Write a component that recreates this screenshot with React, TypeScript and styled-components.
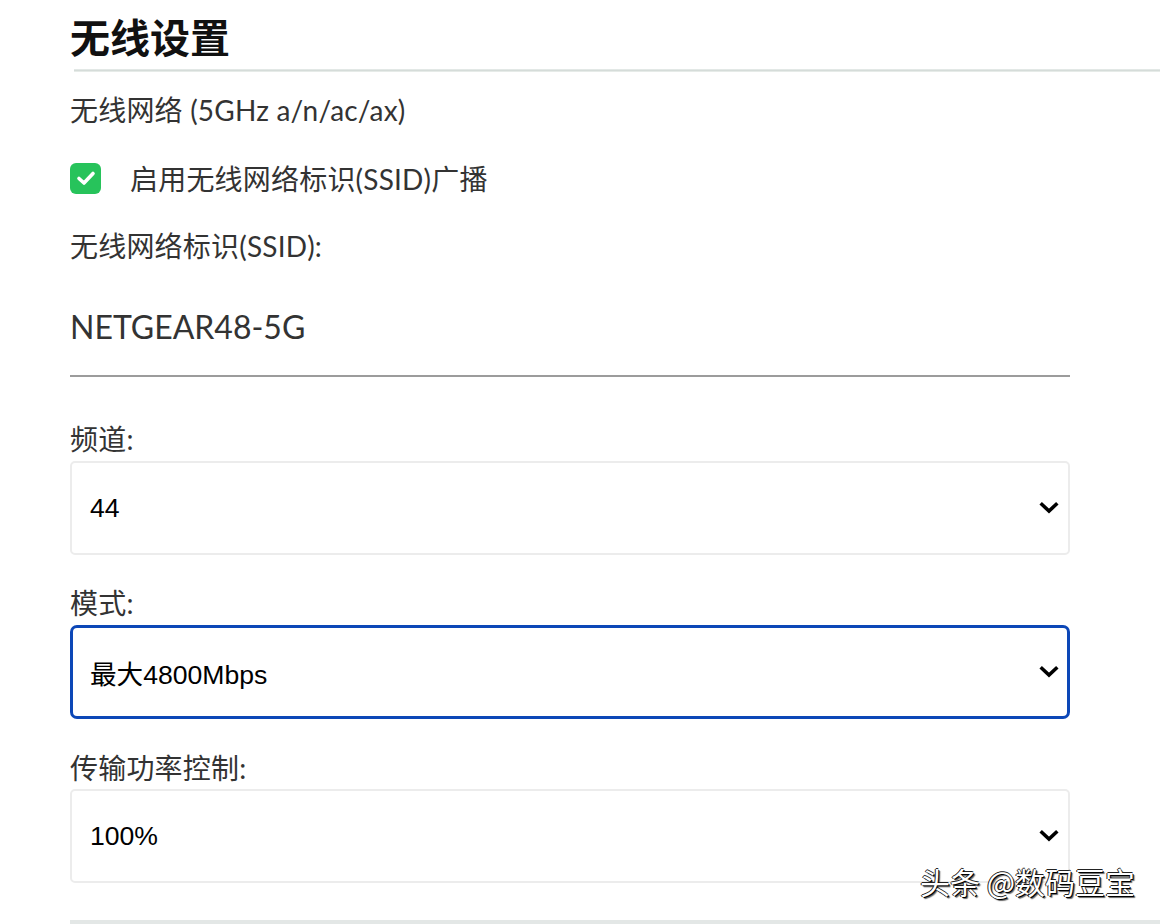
import React from "react";
import styled, { createGlobalStyle } from "styled-components";

const Global = createGlobalStyle`
  html, body { margin: 0; padding: 0; background: #fff; }
  body { font-family: Lato, "Noto Sans CJK SC", sans-serif; }
`;

const Page = styled.div`
  position: relative;
  width: 1160px;
  height: 924px;
  overflow: hidden;
  background: #fff;
  padding-top: 14px;
  box-sizing: border-box;
`;

const Title = styled.h1`
  margin: 0 0 11px 70px;
  font-family: "Noto Sans CJK SC", sans-serif;
  font-weight: 700;
  font-size: 40px;
  line-height: 44px;
  color: #111;
`;

const HeaderRule = styled.div`
  margin-left: 74px;
  height: 3px;
  background: linear-gradient(#e9eeec, #d5dcd9 50%, #eef2f0);
`;

const Content = styled.div`
  display: flex;
  flex-direction: column;
  padding-left: 70px;
  width: 1000px;
`;

const Text = styled.div<{ $mt: number }>`
  margin-top: ${(p) => p.$mt}px;
  font-family: Lato, "Noto Sans CJK SC", sans-serif;
  font-size: 28px;
  line-height: 32px;
  letter-spacing: 0.2px;
  color: #333;
`;

const CheckRow = styled.label<{ $mt: number }>`
  margin-top: ${(p) => p.$mt}px;
  display: flex;
  align-items: center;
  gap: 29px;
  height: 32px;
  font-family: Lato, "Noto Sans CJK SC", sans-serif;
  font-size: 28px;
  letter-spacing: 0.2px;
  color: #333;
`;

const Box = styled.span`
  width: 31px;
  height: 31px;
  flex: none;
  border-radius: 6px;
  background: #27c35b;
  display: flex;
  align-items: center;
  justify-content: center;
`;

const SsidField = styled.div`
  padding: 47px 0 30px;
  font-family: Lato, "Noto Sans", sans-serif;
  font-size: 32px;
  line-height: 36px;
  color: #333;
  border-bottom: 2px solid #9c9c9c;
`;

const Select = styled.div<{ $mt: number; $focus?: boolean }>`
  margin-top: ${(p) => p.$mt}px;
  height: 94px;
  box-sizing: border-box;
  border: ${(p) => (p.$focus ? "3px solid #0c47b7" : "2px solid #ececec")};
  border-radius: ${(p) => (p.$focus ? "7px" : "5px")};
  display: flex;
  align-items: center;
  justify-content: space-between;
  padding: 0 ${(p) => (p.$focus ? 8 : 9)}px 0 ${(p) => (p.$focus ? 17 : 18)}px;
  font-family: "Liberation Sans", "Noto Sans CJK SC", sans-serif;
  font-size: 26.6px;
  color: #000;
`;

const BottomRule = styled.div`
  position: absolute;
  left: 70px;
  right: 0;
  top: 920px;
  height: 4px;
  background: #e3e7e6;
`;

const Watermark = styled.div`
  position: absolute;
  left: 920px;
  top: 863px;
  font-family: "Noto Sans CJK SC", sans-serif;
  font-size: 30px;
  line-height: 36px;
  color: #fff;
  text-shadow: 1px 1px 0 #000, -1px 0 0 #222, 0 -1px 0 #222, 2px 2px 1px rgba(0,0,0,0.6);
`;

const Chevron = () => (
  <svg width="20" height="14" viewBox="0 0 20 14">
    <polyline
      points="3,3.5 10,10 17,3.5"
      fill="none"
      stroke="#000"
      strokeWidth="3.6"
      strokeLinecap="square"
    />
  </svg>
);

const Check = () => (
  <svg width="22" height="22" viewBox="0 0 22 22">
    <polyline
      points="4,11.5 9,16 18,6.5"
      fill="none"
      stroke="#fff"
      strokeWidth="3.6"
      strokeLinecap="round"
      strokeLinejoin="round"
    />
  </svg>
);

export default function App() {
  return (
    <Page>
      <Global />
      <Title>无线设置</Title>
      <HeaderRule />
      <Content>
        <Text $mt={22}>无线网络 (5GHz a/n/ac/ax)</Text>
        <CheckRow $mt={36}>
          <Box>
            <Check />
          </Box>
          启用无线网络标识(SSID)广播
        </CheckRow>
        <Text $mt={36}>无线网络标识(SSID):</Text>
        <SsidField>NETGEAR48-5G</SsidField>
        <Text $mt={46}>频道:</Text>
        <Select $mt={6}>
          <span>44</span>
          <Chevron />
        </Select>
        <Text $mt={32}>模式:</Text>
        <Select $mt={6} $focus>
          <span>最大4800Mbps</span>
          <Chevron />
        </Select>
        <Text $mt={33}>传输功率控制:</Text>
        <Select $mt={5}>
          <span>100%</span>
          <Chevron />
        </Select>
      </Content>
      <BottomRule />
      <Watermark>头条 @数码豆宝</Watermark>
    </Page>
  );
}
